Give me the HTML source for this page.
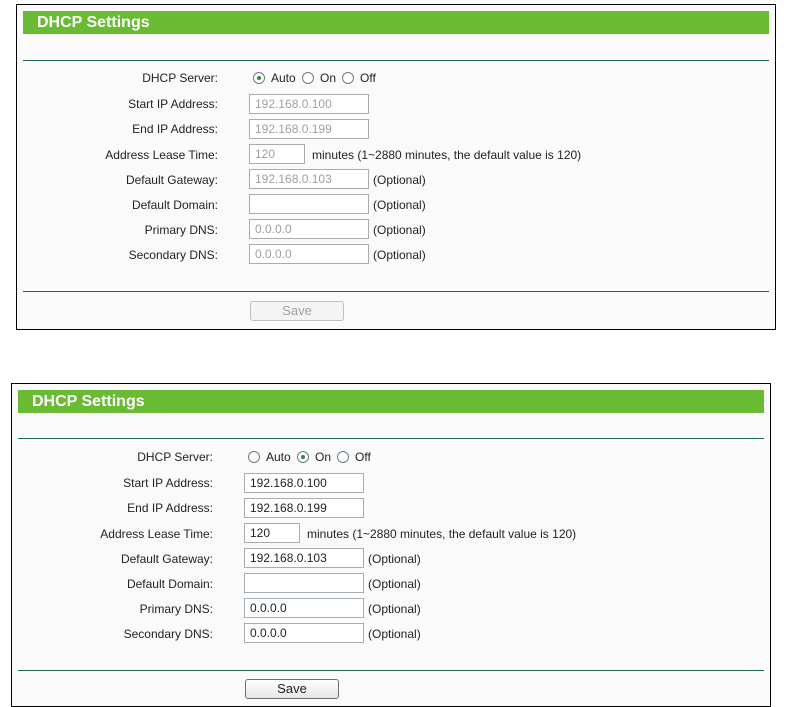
<!DOCTYPE html>
<html><head><meta charset="utf-8"><style>
body{margin:0;width:791px;height:707px;background:#fff;position:relative;overflow:hidden;font-family:"Liberation Sans",Arial,sans-serif;font-size:12px;color:#222}
.p{position:absolute;width:758px;border:1px solid #000;background:#fafafa}
.bar{position:absolute;left:6px;top:6px;width:746px;height:23px;background:#6aba34;color:#fff;font-weight:bold;font-size:16px;line-height:23px;text-indent:14px}
.ln{position:absolute;left:6px;width:746px;height:1px;border-top:1px solid #1e6b4a}
.lb{position:absolute;width:201px;text-align:right;line-height:14px}
.in{position:absolute;left:232px;width:113px;height:18px;border:1px solid #a5acb2;background:#fff;padding-left:5px;line-height:18px;box-sizing:content-box}
.d .in{color:#a0a0a0}
.t{position:absolute;line-height:14px}
.r{position:absolute;width:10px;height:10px;border:1px solid #6b7a86;border-radius:50%;background:#fff}
.r.on::after{content:"";position:absolute;left:3px;top:3px;width:4px;height:4px;border-radius:50%;background:#2e8b3e}
.sv{position:absolute;left:233px;width:92px;height:18px;border:1px solid #707070;border-radius:3px;background:linear-gradient(#fff,#e6e6e6);text-align:center;line-height:18px;font-size:13px}
</style></head><body>

<div class="p d" style="left:16px;top:4px;height:324px">
<div class="bar">DHCP Settings</div>
<div class="ln" style="top:55px"></div>
<div class="lb" style="top:66px">DHCP Server:</div>
<div class="r on" style="left:236px;top:67px"></div><div class="t" style="left:254px;top:66px">Auto</div>
<div class="r" style="left:285px;top:67px"></div><div class="t" style="left:303px;top:66px">On</div>
<div class="r" style="left:325px;top:67px"></div><div class="t" style="left:343px;top:66px">Off</div>
<div class="lb" style="top:92px">Start IP Address:</div><div class="in" style="top:89px">192.168.0.100</div>
<div class="lb" style="top:117px">End IP Address:</div><div class="in" style="top:114px">192.168.0.199</div>
<div class="lb" style="top:143px">Address Lease Time:</div><div class="in" style="top:139px;width:49px">120</div><div class="t" style="left:295px;top:143px">minutes (1~2880 minutes, the default value is 120)</div>
<div class="lb" style="top:168px">Default Gateway:</div><div class="in" style="top:164px">192.168.0.103</div><div class="t" style="left:356px;top:168px">(Optional)</div>
<div class="lb" style="top:193px">Default Domain:</div><div class="in" style="top:189px"></div><div class="t" style="left:356px;top:193px">(Optional)</div>
<div class="lb" style="top:218px">Primary DNS:</div><div class="in" style="top:214px">0.0.0.0</div><div class="t" style="left:356px;top:218px">(Optional)</div>
<div class="lb" style="top:243px">Secondary DNS:</div><div class="in" style="top:239px">0.0.0.0</div><div class="t" style="left:356px;top:243px">(Optional)</div>
<div class="ln" style="top:286px"></div>
<div class="sv" style="top:296px;color:#a0a0a0;border-color:#c0c0c0;background:#f4f4f4">Save</div>
</div>

<div class="p" style="left:11px;top:383px;height:322px">
<div class="bar">DHCP Settings</div>
<div class="ln" style="top:54px"></div>
<div class="lb" style="top:66px">DHCP Server:</div>
<div class="r" style="left:236px;top:67px"></div><div class="t" style="left:254px;top:66px">Auto</div>
<div class="r on" style="left:285px;top:67px"></div><div class="t" style="left:303px;top:66px">On</div>
<div class="r" style="left:325px;top:67px"></div><div class="t" style="left:343px;top:66px">Off</div>
<div class="lb" style="top:92px">Start IP Address:</div><div class="in" style="top:89px">192.168.0.100</div>
<div class="lb" style="top:117px">End IP Address:</div><div class="in" style="top:114px">192.168.0.199</div>
<div class="lb" style="top:143px">Address Lease Time:</div><div class="in" style="top:139px;width:49px">120</div><div class="t" style="left:295px;top:143px">minutes (1~2880 minutes, the default value is 120)</div>
<div class="lb" style="top:168px">Default Gateway:</div><div class="in" style="top:164px">192.168.0.103</div><div class="t" style="left:356px;top:168px">(Optional)</div>
<div class="lb" style="top:193px">Default Domain:</div><div class="in" style="top:189px"></div><div class="t" style="left:356px;top:193px">(Optional)</div>
<div class="lb" style="top:218px">Primary DNS:</div><div class="in" style="top:214px">0.0.0.0</div><div class="t" style="left:356px;top:218px">(Optional)</div>
<div class="lb" style="top:243px">Secondary DNS:</div><div class="in" style="top:239px">0.0.0.0</div><div class="t" style="left:356px;top:243px">(Optional)</div>
<div class="ln" style="top:286px"></div>
<div class="sv" style="top:295px">Save</div>
</div>
</body></html>
